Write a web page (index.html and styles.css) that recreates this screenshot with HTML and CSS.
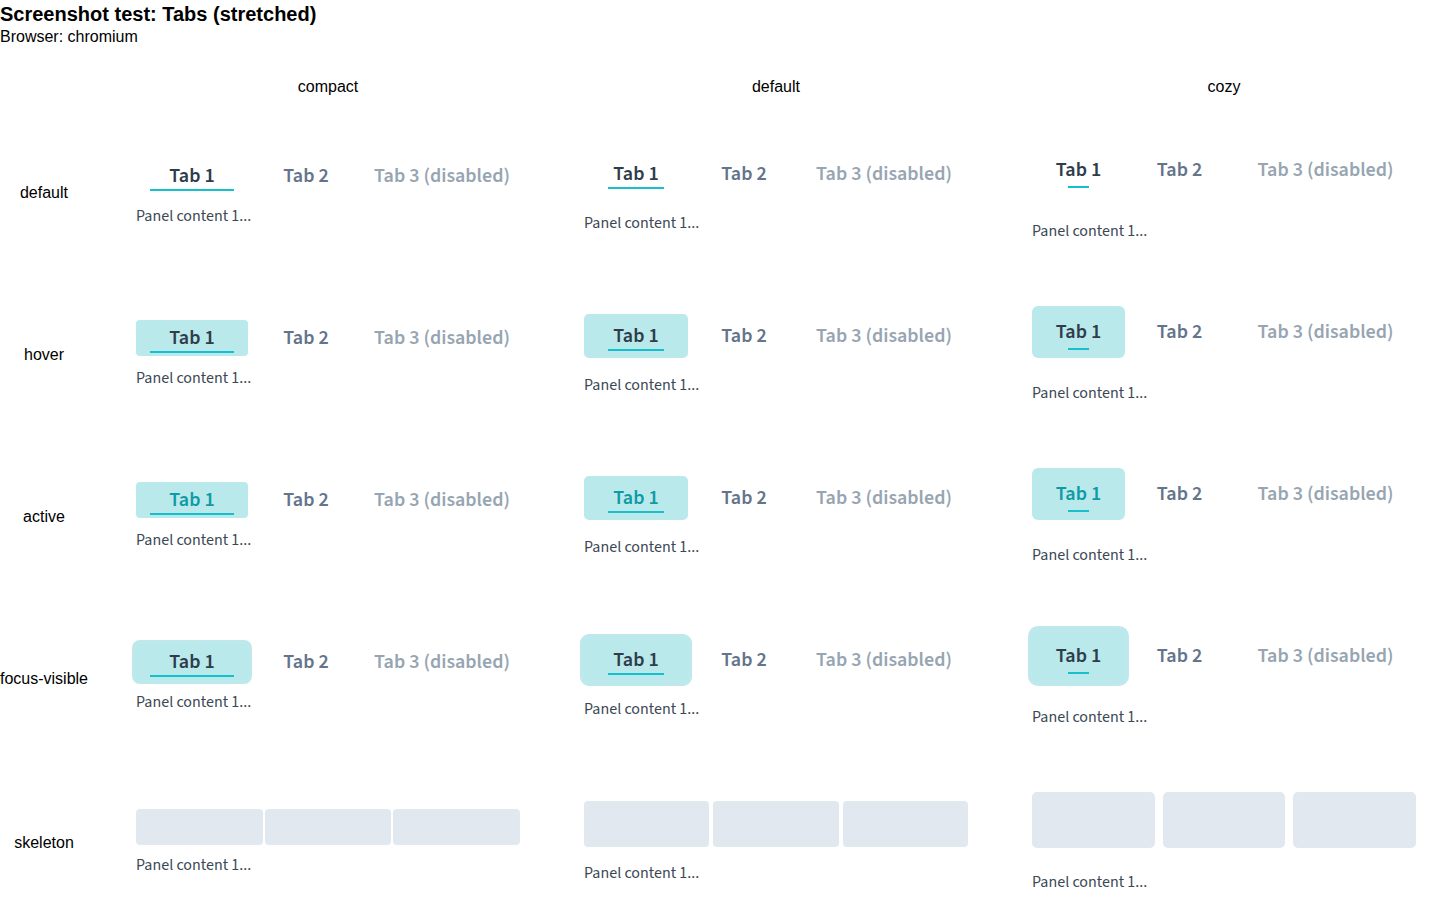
FILE: index.html
```html
<!DOCTYPE html>
<html lang="en">
<head>
<meta charset="utf-8">
<title>Screenshot test: Tabs (stretched)</title>
<link rel="stylesheet" href="styles.css">
</head>
<body>
<div class="intro">
  <div class="title">Screenshot test: Tabs (stretched)</div>
  <div class="browser">Browser: chromium</div>
</div>
<div class="matrix">
  <div class="corner"></div>
  <div class="colhead">compact</div>
  <div class="colhead">default</div>
  <div class="colhead">cozy</div>

  <div class="rowhead">default</div>
  <div class="cell compact"><div class="tablist"><button class="tab selected"><span>Tab 1</span><i class="bar"></i></button><button class="tab">Tab 2</button><button class="tab disabled">Tab 3 (disabled)</button></div><div class="panel">Panel content 1...</div></div>
  <div class="cell default"><div class="tablist"><button class="tab selected"><span>Tab 1</span><i class="bar"></i></button><button class="tab">Tab 2</button><button class="tab disabled">Tab 3 (disabled)</button></div><div class="panel">Panel content 1...</div></div>
  <div class="cell cozy"><div class="tablist"><button class="tab selected"><span>Tab 1</span><i class="bar"></i></button><button class="tab">Tab 2</button><button class="tab disabled">Tab 3 (disabled)</button></div><div class="panel">Panel content 1...</div></div>

  <div class="rowhead">hover</div>
  <div class="cell compact"><div class="tablist"><button class="tab selected is-hover"><span>Tab 1</span><i class="bar"></i></button><button class="tab">Tab 2</button><button class="tab disabled">Tab 3 (disabled)</button></div><div class="panel">Panel content 1...</div></div>
  <div class="cell default"><div class="tablist"><button class="tab selected is-hover"><span>Tab 1</span><i class="bar"></i></button><button class="tab">Tab 2</button><button class="tab disabled">Tab 3 (disabled)</button></div><div class="panel">Panel content 1...</div></div>
  <div class="cell cozy"><div class="tablist"><button class="tab selected is-hover"><span>Tab 1</span><i class="bar"></i></button><button class="tab">Tab 2</button><button class="tab disabled">Tab 3 (disabled)</button></div><div class="panel">Panel content 1...</div></div>

  <div class="rowhead">active</div>
  <div class="cell compact"><div class="tablist"><button class="tab selected is-active"><span>Tab 1</span><i class="bar"></i></button><button class="tab">Tab 2</button><button class="tab disabled">Tab 3 (disabled)</button></div><div class="panel">Panel content 1...</div></div>
  <div class="cell default"><div class="tablist"><button class="tab selected is-active"><span>Tab 1</span><i class="bar"></i></button><button class="tab">Tab 2</button><button class="tab disabled">Tab 3 (disabled)</button></div><div class="panel">Panel content 1...</div></div>
  <div class="cell cozy"><div class="tablist"><button class="tab selected is-active"><span>Tab 1</span><i class="bar"></i></button><button class="tab">Tab 2</button><button class="tab disabled">Tab 3 (disabled)</button></div><div class="panel">Panel content 1...</div></div>

  <div class="rowhead">focus-visible</div>
  <div class="cell compact"><div class="tablist"><button class="tab selected is-focus"><span>Tab 1</span><i class="bar"></i></button><button class="tab">Tab 2</button><button class="tab disabled">Tab 3 (disabled)</button></div><div class="panel">Panel content 1...</div></div>
  <div class="cell default"><div class="tablist"><button class="tab selected is-focus"><span>Tab 1</span><i class="bar"></i></button><button class="tab">Tab 2</button><button class="tab disabled">Tab 3 (disabled)</button></div><div class="panel">Panel content 1...</div></div>
  <div class="cell cozy"><div class="tablist"><button class="tab selected is-focus"><span>Tab 1</span><i class="bar"></i></button><button class="tab">Tab 2</button><button class="tab disabled">Tab 3 (disabled)</button></div><div class="panel">Panel content 1...</div></div>

  <div class="rowhead">skeleton</div>
  <div class="cell compact"><div class="skeleton"><div class="bone"></div><div class="bone"></div><div class="bone"></div></div><div class="panel">Panel content 1...</div></div>
  <div class="cell default"><div class="skeleton"><div class="bone"></div><div class="bone"></div><div class="bone"></div></div><div class="panel">Panel content 1...</div></div>
  <div class="cell cozy"><div class="skeleton"><div class="bone"></div><div class="bone"></div><div class="bone"></div></div><div class="panel">Panel content 1...</div></div>
</div>
</body>
</html>
```
FILE: styles.css
```css
html, body {
  margin: 0;
  padding: 0;
  overflow: hidden;
  background: #ffffff;
}
body {
  font-family: "Liberation Sans", Arial, sans-serif;
  color: #000;
}
.title {
  font-size: 20px;
  font-weight: 700;
  line-height: 28px;
}
.browser {
  font-size: 16px;
  line-height: 18px;
}
.matrix {
  margin-top: 16px;
  display: grid;
  grid-template-columns: 104px repeat(3, 448px);
  grid-template-rows: 50px 162px 162px 162px 162px 166px;
  width: 1448px;
}
.colhead {
  font-size: 16px;
  display: flex;
  align-items: center;
  justify-content: center;
}
.rowhead {
  font-size: 16px;
  display: flex;
  align-items: center;
  justify-content: center;
  width: 88px;
  white-space: nowrap;
}
.cell {
  padding: 0 32px 2px;
  display: flex;
  flex-direction: column;
  justify-content: center;
  font-family: "Source Sans 3", "Source Sans Pro", Lato, "Noto Sans", sans-serif;
}
.tablist {
  display: flex;
  align-items: stretch;
}
.tab {
  position: relative;
  border: 0;
  margin: 0;
  background: transparent;
  font-family: inherit;
  font-size: 20px;
  font-weight: 600;
  color: #64748b;
  display: flex;
  align-items: center;
  justify-content: center;
  white-space: nowrap;
  cursor: pointer;
  border-radius: 4px;
}
.tab.selected { color: #2f3d4a; }
.tab.disabled { color: #97a5b2; cursor: default; }
.tab.is-hover, .tab.is-active, .tab.is-focus { background: #b9e9eb; }
.tab.is-active { color: #0f9ba6; }
.tab.is-focus { box-shadow: 0 0 0 4px #bde9ec; }
.bar {
  position: absolute;
  left: 14px;
  right: 14px;
  bottom: 3px;
  height: 2px;
  background: #17bfcc;
}
.panel {
  font-size: 16px;
  line-height: 20px;
  color: #3b4854;
  white-space: nowrap;
}
.skeleton {
  display: flex;
}
.bone {
  flex: 1;
  background: #e2e8ef;
  border-radius: 4px;
}

/* compact */
.compact .tablist, .compact .skeleton { gap: 2px; }
.compact .tab { height: 36px; min-width: 112px; padding: 0 10px; }
.compact .bar { left: 14px; right: 14px; bottom: 3px; }
.compact .tablist + .panel { margin-top: 12px; }
.compact .bone { height: 36px; }
.compact .skeleton + .panel { margin-top: 10px; }

/* default */
.default .tablist, .default .skeleton { gap: 4px; }
.default .tab { height: 44px; min-width: 104px; padding: 0 16px; border-radius: 5px; }
.default .bar { left: 24px; right: 24px; bottom: 7px; }
.default .tablist + .panel { margin-top: 17px; }
.default .bone { height: 46px; }
.default .skeleton + .panel { margin-top: 16px; }

/* cozy */
.cozy .tablist, .cozy .skeleton { gap: 8px; }
.cozy .tab { height: 52px; min-width: 93px; padding: 0 24px; border-radius: 6px; }
.cozy .tab.disabled { padding-left: 25px; }
.cozy .bar { left: 36px; right: 36px; bottom: 8px; }
.cozy .tablist + .panel { margin-top: 25px; }
.cozy .bone { height: 56px; border-radius: 5px; }
.cozy .skeleton + .panel { margin-top: 24px; }
```
